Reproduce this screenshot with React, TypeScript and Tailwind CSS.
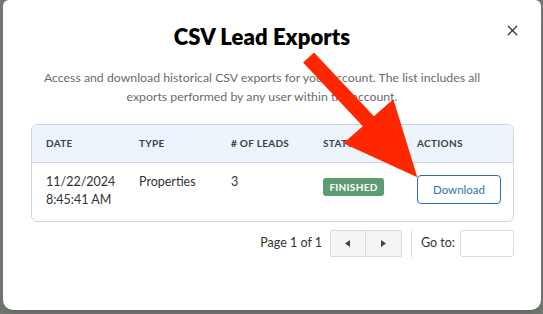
import { X } from "lucide-react";

const font = { fontFamily: "Lato, 'Liberation Sans', sans-serif" };

export default function App() {
  return (
    <div
      className="w-[543px] h-[314px] overflow-hidden bg-[#747873] pl-[3px] pr-[2px] pb-[4px]"
      style={font}
    >
      <div className="relative h-full w-full bg-white rounded-b-[10px] rounded-t-[6px] shadow-lg flex flex-col items-center">
        {/* close */}
        <button className="absolute top-[22px] right-[20px] text-[#333]">
          <X size={17} strokeWidth={1.8} />
        </button>

        <div className="flex flex-col items-center pr-[20px] w-full">
          <h1 className="mt-[23px] text-[22px] leading-[28px] font-extrabold text-black tracking-[0.1px]">
            CSV Lead Exports
          </h1>

          <p className="mt-[17px] w-[445px] text-center text-[12.3px] leading-[19px] text-[#6b6b6b]">
            Access and download historical CSV exports for your account. The list includes all
            exports performed by any user within the account.
          </p>
        </div>

        {/* table */}
        <div className="mt-[18px] w-[483px] self-start ml-[28px] border border-[#cdd5de] rounded-[6px] overflow-hidden">
          <div className="grid grid-cols-[93px_92px_92px_94px_1fr] h-[38px] items-center bg-[#edf4fc] border-b border-[#cdd5de] pl-[14px] text-[10px] font-bold tracking-[0.3px] text-[#3b404a]">
            <div>DATE</div>
            <div>TYPE</div>
            <div># OF LEADS</div>
            <div>STATUS</div>
            <div>ACTIONS</div>
          </div>
          <div className="grid grid-cols-[93px_92px_92px_94px_1fr] h-[58px] items-start pl-[14px] text-[12.5px] leading-[18px] text-[#333]">
            <div className="pt-[10px]">
              <div>11/22/2024</div>
              <div>8:45:41 AM</div>
            </div>
            <div className="pt-[10px]">Properties</div>
            <div className="pt-[10px]">3</div>
            <div className="pt-[15px]">
              <span className="inline-flex items-center justify-center w-[61px] h-[18px] rounded-[3px] bg-[#5e9b73] text-white text-[10px] font-bold tracking-[0.3px]">
                FINISHED
              </span>
            </div>
            <div className="pt-[12px]">
              <button className="w-[84px] h-[29px] rounded-[4px] border border-[#2a6fb0] text-[#2f74b6] text-[11.5px]">
                Download
              </button>
            </div>
          </div>
        </div>

        {/* pagination */}
        <div className="mt-[8px] self-end mr-[27px] flex items-center text-[12.5px] text-[#333]">
          <span className="mr-[8px]">Page 1 of 1</span>
          <div className="flex">
            <button className="w-[36px] h-[27px] flex items-center justify-center bg-[#f5f5f5] border border-[#d9d9d9] rounded-l-[2px]">
              <svg width="5" height="7" viewBox="0 0 5 7">
                <polygon points="5,0 5,7 0,3.5" fill="#444" />
              </svg>
            </button>
            <button className="w-[36px] h-[27px] flex items-center justify-center bg-[#f5f5f5] border border-l-0 border-[#d9d9d9] rounded-r-[2px]">
              <svg width="5" height="7" viewBox="0 0 5 7">
                <polygon points="0,0 0,7 5,3.5" fill="#444" />
              </svg>
            </button>
          </div>
          <div className="w-px h-[26px] bg-[#d9d9d9] mx-[9px]" />
          <span className="mr-[5px]">Go to:</span>
          <div className="w-[54px] h-[27px] border border-[#dcdcdc] rounded-[3px] bg-white" />
        </div>

        {/* annotation arrow */}
        <svg
          className="absolute left-[-3px] top-0 pointer-events-none"
          width="543"
          height="314"
          viewBox="0 0 543 314"
        >
          <polygon
            points="314,52.5 373.9,116.3 393.3,99.3 417.3,177.3 343.3,143.3 362.8,126.3 303,62.5"
            fill="#ff2600"
          />
        </svg>
      </div>
    </div>
  );
}
